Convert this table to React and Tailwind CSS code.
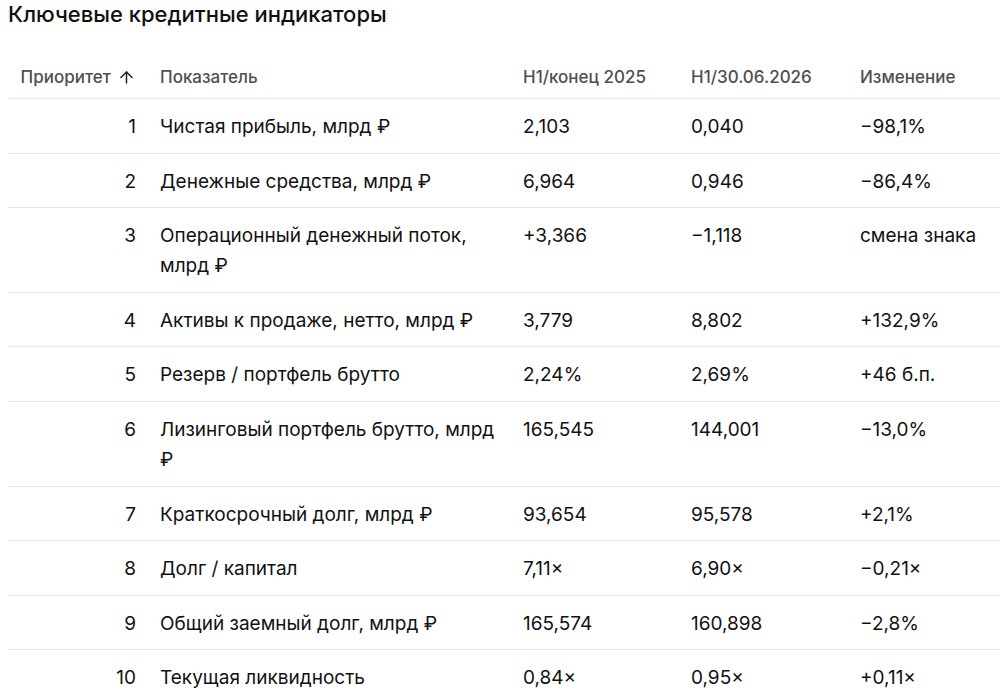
import React from "react";
import { ArrowUp } from "lucide-react";

const rows = [
  { p: 1, name: ["Чистая прибыль, млрд ₽"], a: "2,103", b: "0,040", c: "−98,1%" },
  { p: 2, name: ["Денежные средства, млрд ₽"], a: "6,964", b: "0,946", c: "−86,4%" },
  { p: 3, name: ["Операционный денежный поток,", "млрд ₽"], a: "+3,366", b: "−1,118", c: "смена знака" },
  { p: 4, name: ["Активы к продаже, нетто, млрд ₽"], a: "3,779", b: "8,802", c: "+132,9%" },
  { p: 5, name: ["Резерв / портфель брутто"], a: "2,24%", b: "2,69%", c: "+46 б.п." },
  { p: 6, name: ["Лизинговый портфель брутто, млрд", "₽"], a: "165,545", b: "144,001", c: "−13,0%" },
  { p: 7, name: ["Краткосрочный долг, млрд ₽"], a: "93,654", b: "95,578", c: "+2,1%" },
  { p: 8, name: ["Долг / капитал"], a: "7,11×", b: "6,90×", c: "−0,21×" },
  { p: 9, name: ["Общий заемный долг, млрд ₽"], a: "165,574", b: "160,898", c: "−2,8%" },
  { p: 10, name: ["Текущая ликвидность"], a: "0,84×", b: "0,95×", c: "+0,11×" },
];

export default function App() {
  return (
    <div
      className="h-[693px] overflow-hidden bg-white pl-2 text-[#111]"
      style={{ fontFamily: "Inter, 'Noto Sans', sans-serif" }}
    >
      <h1 className="text-[22px] font-medium leading-7 text-[#111]">Ключевые кредитные индикаторы</h1>

      <table className="mt-[22px] w-full table-fixed border-collapse">
        <colgroup>
          <col className="w-[140px]" />
          <col className="w-[363px]" />
          <col className="w-[168px]" />
          <col className="w-[169px]" />
          <col />
        </colgroup>
        <thead>
          {/* header row */}
          <tr className="border-b border-[#e6e6e6] text-[17px] font-medium leading-[30px] text-[#4f4f4f]">
            <th className="px-3 pt-3 pb-[6px] text-right font-medium">
              <span className="inline-flex items-center gap-[6px]">
                Приоритет
                <ArrowUp size={19} strokeWidth={1.9} className="text-[#222]" />
              </span>
            </th>
            <th className="px-3 pt-3 pb-[6px] text-left font-medium">Показатель</th>
            <th className="px-3 pt-3 pb-[6px] text-left font-medium">H1/конец 2025</th>
            <th className="px-3 pt-3 pb-[6px] text-left font-medium">H1/30.06.2026</th>
            <th className="px-3 pt-3 pb-[6px] text-left font-medium">Изменение</th>
          </tr>
        </thead>
        <tbody className="text-[19px] leading-[30px]">
          {rows.map((r) => (
            <tr key={r.p} className="border-b border-[#e6e6e6] align-top">
              <td className="px-3 pt-[13px] pb-[10.6px] text-right">{r.p}</td>
              <td className="px-3 pt-[13px] pb-[10.6px]">
                {r.name.map((line, i) => (
                  <div key={i}>{line}</div>
                ))}
              </td>
              <td className="px-3 pt-[13px] pb-[10.6px]">{r.a}</td>
              <td className="px-3 pt-[13px] pb-[10.6px]">{r.b}</td>
              <td className="whitespace-nowrap px-3 pt-[13px] pb-[10.6px]">{r.c}</td>
            </tr>
          ))}
        </tbody>
      </table>
    </div>
  );
}
